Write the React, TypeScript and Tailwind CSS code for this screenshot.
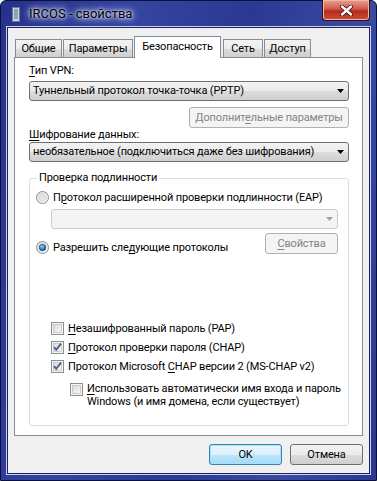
import React from 'react';

const font = "font-['Roboto','Liberation_Sans',Arial,sans-serif]";
const ul = 'underline underline-offset-[2px] decoration-[1px]';

function Arrow({ disabled }: { disabled?: boolean }) {
  return (
    <svg width="7" height="4" viewBox="0 0 7 4" className="shrink-0">
      <path d="M0 0h7L3.5 4z" fill={disabled ? '#a3a3a3' : '#000'} />
    </svg>
  );
}

function Combo({ text, width, disabled }: { text?: string; width: string; disabled?: boolean }) {
  return (
    <div
      className={`${width} h-[20px] flex items-center pl-[3px] pr-[4px] rounded-[3px] border ${
        disabled
          ? 'border-[#c9cbce] bg-[#f4f4f4]'
          : 'border-[#707070] bg-[linear-gradient(#f2f2f2_0%,#ebebeb_50%,#dddddd_50%,#cfcfcf_100%)]'
      }`}
    >
      <span className="flex-1 leading-[14px] whitespace-nowrap overflow-hidden">{text}</span>
      <Arrow disabled={disabled} />
    </div>
  );
}

function Radio({ checked }: { checked?: boolean }) {
  return (
    <svg width="13" height="13" viewBox="0 0 13 13" className="shrink-0">
      <defs>
        <linearGradient id="rg" x1="0" y1="0" x2="1" y2="1">
          <stop offset="0" stopColor="#dcdcdc" />
          <stop offset="1" stopColor="#fbfbfb" />
        </linearGradient>
        <radialGradient id="rdot" cx="0.4" cy="0.35" r="0.7">
          <stop offset="0" stopColor="#8ad4ff" />
          <stop offset="0.6" stopColor="#2a85c8" />
          <stop offset="1" stopColor="#0d3f78" />
        </radialGradient>
      </defs>
      <circle cx="6.5" cy="6.5" r="6" fill="url(#rg)" stroke="#8e8f8f" />
      {checked ? (
        <circle cx="6.5" cy="6.5" r="3.3" fill="url(#rdot)" stroke="#1c3f6e" strokeWidth="0.6" />
      ) : (
        <circle cx="6.5" cy="6.5" r="3.5" fill="#e4e4e4" stroke="#d2d2d2" strokeWidth="0.6" />
      )}
    </svg>
  );
}

function Check({ checked }: { checked?: boolean }) {
  return (
    <svg width="13" height="13" viewBox="0 0 13 13" className="shrink-0">
      <defs>
        <linearGradient id="cg" x1="0" y1="0" x2="1" y2="1">
          <stop offset="0" stopColor="#d9d9d9" />
          <stop offset="1" stopColor="#f9f9f9" />
        </linearGradient>
      </defs>
      <rect x="0.5" y="0.5" width="12" height="12" fill="#f4f4f4" stroke="#8e8f8f" />
      <rect x="2.5" y="2.5" width="8" height="8" fill="url(#cg)" stroke="#b5b5b5" strokeWidth="0.6" />
      {checked && <path d="M3 6.2l2.2 2.6L10 2.6" fill="none" stroke="#4a5f8e" strokeWidth="1.8" />}
    </svg>
  );
}

function Button({ children, width, disabled, primary }: { children: React.ReactNode; width: string; disabled?: boolean; primary?: boolean }) {
  let cls = 'border-[#707070] bg-[linear-gradient(#f2f2f2_0%,#ebebeb_50%,#dddddd_50%,#cfcfcf_100%)] text-black';
  if (disabled) cls = 'border-[#adb2b5] bg-[#f4f4f4] text-[#838383]';
  if (primary) cls = 'border-[#3c7fb1] bg-[linear-gradient(#eaf6fd_0%,#d9f0fc_50%,#bee6fd_50%,#a7d9f5_100%)] text-black shadow-[inset_0_0_0_1px_#9ee5ff]';
  return (
    <div className={`${width} h-[21px] flex items-center justify-center rounded-[3px] border leading-[14px] whitespace-nowrap ${cls}`}>
      {children}
    </div>
  );
}

const tabs = [
  { label: 'Общие', w: 'w-[47px]' },
  { label: 'Параметры', w: 'w-[70px]' },
  { label: 'Безопасность', w: 'w-[87px]', active: true },
  { label: 'Сеть', w: 'w-[40px]' },
  { label: 'Доступ', w: 'w-[47px]' },
];

export default function App() {
  return (
    <div className={`w-[377px] h-[481px] flex flex-col border border-[#0b1138] rounded-t-[6px] bg-[linear-gradient(100deg,#25318a_0%,#3444a0_30%,#2b3992_55%,#3a4aa3_80%,#2a378f_100%)] text-[11px] tracking-[-0.15px] text-black ${font}`}>
      {/* Title bar */}
      <div className="h-[25px] flex items-start shrink-0">
        <svg width="8" height="15" viewBox="0 0 8 15" className="ml-[11px] mt-[6px]">
          <rect x="0.5" y="0.5" width="7" height="14" fill="#c9d3df" stroke="#6d7d92" />
          <path d="M2 3h4M2 5h4M2 7h4M2 9h4M2 11h4" stroke="#55708f" strokeWidth="1" />
        </svg>
        <span className="ml-[9px] mt-[6px] leading-[14px] text-[13px] tracking-normal whitespace-nowrap [text-shadow:0_0_6px_#e8ecff,0_0_10px_#c8d2ff,0_0_3px_#fff]">
          IRCOS - свойства
        </span>
        <div className="ml-auto mr-[6px] -mt-[1px] w-[48px] h-[21px] rounded-b-[4px] border border-[#3a0c0c] border-t-0 bg-[linear-gradient(#e8a093_0%,#d0594a_45%,#b42a1c_55%,#c9503c_100%)] shadow-[inset_0_0_0_1px_#f0b8a8] flex items-center justify-center">
          <svg width="13" height="11" viewBox="0 0 13 11">
            <path d="M2 1.5l9 8M11 1.5l-9 8" stroke="#3b0b0b" strokeWidth="4" strokeLinecap="round" />
            <path d="M2 1.5l9 8M11 1.5l-9 8" stroke="#fff" strokeWidth="2.4" strokeLinecap="round" />
          </svg>
        </div>
      </div>

      {/* Frame */}
      <div className="flex-1 px-[5px] pb-[5px] flex">
        <div className="flex-1 flex border border-[#c9d1ec]">
          <div className="flex-1 flex flex-col border border-[#1b2362] bg-[#f0f0f0] px-[6px] pt-[8px]">
            {/* Tabs */}
            <div className="flex items-end h-[21px] pl-[1px] relative z-10">
              {tabs.map((t, i) =>
                t.active ? (
                  <div
                    key={t.label}
                    className={`${t.w} h-[22px] -mb-[1px] mx-[1px] border border-b-0 border-[#898c95] bg-white flex items-start justify-center pt-[3px] leading-[14px] whitespace-nowrap`}
                  >
                    {t.label}
                  </div>
                ) : (
                  <div
                    key={t.label}
                    className={`${t.w} h-[18px] ${i > 0 ? 'ml-[1px]' : ''} border border-b-0 border-[#898c95] bg-[linear-gradient(#f2f2f2_0%,#ebebeb_50%,#dddddd_50%,#cfcfcf_100%)] flex items-center justify-center leading-[14px] whitespace-nowrap`}
                  >
                    {t.label}
                  </div>
                )
              )}
            </div>

            {/* Panel */}
            <div className="h-[379px] border border-[#898c95] bg-white pl-[14px] pt-[6px] flex flex-col whitespace-nowrap">
              <div className="leading-[14px]">
                <span className={ul}>Т</span>ип VPN:
              </div>
              <div className="mt-[3px]">
                <Combo width="w-[320px]" text="Туннельный протокол точка-точка (PPTP)" />
              </div>
              <div className="mt-[6px] w-[320px] flex justify-end">
                <Button width="w-[160px]" disabled>
                  <span>
                    Дополнит<span className={ul}>е</span>льные параметры
                  </span>
                </Button>
              </div>
              <div className="leading-[14px]">
                <span className={ul}>Ш</span>ифрование данных:
              </div>
              <div>
                <Combo width="w-[320px]" text="необязательное (подключиться даже без шифрования)" />
              </div>

              {/* Group */}
              <div className="relative mt-[16px] w-[320px] h-[248px] border border-[#d5dfe5] rounded-[3px] pl-[6px] pt-[12px] flex flex-col">
                <span className="absolute -top-[8px] left-[7px] bg-white px-[2px] leading-[14px]">Проверка подлинности</span>
                <div className="flex items-center gap-[4px] h-[13px]">
                  <Radio />
                  <span className="leading-[14px]">
                    П<span className={ul}>р</span>отокол расширенной проверки подлинности (EAP)
                  </span>
                </div>
                <div className="ml-[15px] mt-[5px]">
                  <Combo width="w-[287px]" disabled />
                </div>
                <div className="flex items-start mt-[4px]">
                  <div className="flex items-center gap-[4px] h-[13px] mt-[8px] flex-1">
                    <Radio checked />
                    <span className="leading-[14px]">
                      Разрешить сле<span className={ul}>д</span>ующие протоколы
                    </span>
                  </div>
                  <div className="mr-[10px]">
                    <Button width="w-[73px]" disabled>
                      <span>
                        <span className={ul}>С</span>войства
                      </span>
                    </Button>
                  </div>
                </div>

                <div className="ml-[15px] mt-[68px] flex flex-col gap-[6px]">
                  <div className="flex items-center gap-[4px] h-[13px]">
                    <Check />
                    <span className="leading-[14px]">
                      <span className={ul}>Н</span>езашифрованный пароль (PAP)
                    </span>
                  </div>
                  <div className="flex items-center gap-[4px] h-[13px]">
                    <Check checked />
                    <span className="leading-[14px]">
                      <span className={ul}>П</span>ротокол проверки пароля (CHAP)
                    </span>
                  </div>
                  <div className="flex items-center gap-[4px] h-[13px]">
                    <Check checked />
                    <span className="leading-[14px]">
                      Протокол Microsoft <span className={ul}>C</span>HAP версии 2 (MS-CHAP v2)
                    </span>
                  </div>
                  <div className="flex items-start gap-[4px] ml-[19px] mt-[4px]">
                    <Check />
                    <span className="leading-[13px] -mt-[1px]">
                      <span className={ul}>И</span>спользовать автоматически имя входа и пароль
                      <br />
                      Windows (и имя домена, если существует)
                    </span>
                  </div>
                </div>
              </div>
            </div>

            {/* Buttons */}
            <div className="flex justify-end gap-[8px] mt-[8px]">
              <Button width="w-[73px]" primary>OK</Button>
              <Button width="w-[73px]">Отмена</Button>
            </div>
          </div>
        </div>
      </div>
    </div>
  );
}
